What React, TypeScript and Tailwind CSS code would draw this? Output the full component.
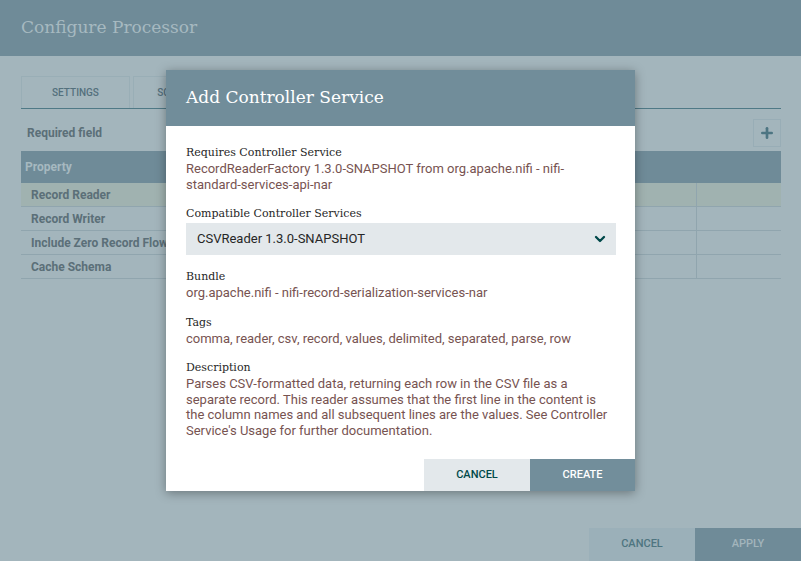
import { ChevronDown, Plus } from "lucide-react";

const slab = "font-['DejaVu_Serif',serif]";
const sans = "font-['Roboto',sans-serif]";

const rows = ["Record Reader", "Record Writer", "Include Zero Record FlowFiles", "Cache Schema"];

function Field({ label, children }: { label: string; children: React.ReactNode }) {
  return (
    <div>
      <div className={`${slab} text-[11px] leading-[16px] text-[#262626]`}>{label}</div>
      <div className="text-[13px] leading-[15.5px] text-[#775351]">{children}</div>
    </div>
  );
}

export default function App() {
  return (
    <div className={`${sans} relative h-[561px] w-[801px] overflow-hidden bg-[#a3b5bc]`}>
      <div className="flex h-[561px] flex-col">
        <div className="flex h-14 items-center bg-[#6f8b98] px-[21px]">
          <h1 className={`${slab} text-[17px] text-[#a6b9c0]`}>Configure Processor</h1>
        </div>

        <div className="pl-[21px] pr-[20px] pt-[20px]">
          <div className="flex gap-[3px] border-b border-[#4f7986]">
            {["SETTINGS", "SCHEDULING"].map((t) => (
              <div
                key={t}
                className="flex h-8 w-[109px] items-center justify-center border border-b-0 border-[#99aeb6] text-[10px] font-medium text-[#54707c]"
              >
                {t}
              </div>
            ))}
          </div>

          <div className="mt-[10px] flex items-center justify-between">
            <span className="pl-[6px] text-[12px] font-bold text-[#5b6f78]">Required field</span>
            <div className="flex h-7 w-7 items-center justify-center border border-[#98adb6]">
              <Plus size={16} strokeWidth={4} className="text-[#4d7582]" />
            </div>
          </div>

          <div className="mt-1">
            <div className="flex h-8 items-center bg-[#6f8b98] px-[4px] text-[12px] font-bold text-[#a6b9c0]">
              Property
            </div>
            {rows.map((r, i) => (
              <div
                key={r}
                className={`flex h-[24px] border-b border-[#90a5ae] text-[12px] font-bold text-[#5b6f78] ${
                  i === 0 ? "bg-[#a0b2b0]" : ""
                }`}
              >
                <div className="flex flex-1 items-center overflow-hidden whitespace-nowrap border-r border-[#90a5ae] pl-[10px]">
                  {r}
                </div>
                <div className="w-[84px]" />
              </div>
            ))}
          </div>
        </div>

        <div className="flex-1" />

        <div className="flex justify-end text-[11px] font-medium">
          <div className="flex h-[33px] w-[106px] items-center justify-center bg-[#9bb0b9] text-[#4e7580]">CANCEL</div>
          <div className="flex h-[33px] w-[106px] items-center justify-center bg-[#6f8b98] text-[#a3b5bc]">APPLY</div>
        </div>
      </div>

      <div className="absolute left-[166px] top-[70px] w-[469px] bg-white shadow-[0_2px_10px_rgba(0,0,0,0.35)]">
        <div className="flex h-14 items-center bg-[#718d9a] px-5">
          <h2 className={`${slab} text-[17px] text-white`}>Add Controller Service</h2>
        </div>
        <div className="flex flex-col gap-[14px] px-5 pt-[19px]">
          <Field label="Requires Controller Service">
            RecordReaderFactory 1.3.0-SNAPSHOT from org.apache.nifi - nifi-
            <br />
            standard-services-api-nar
          </Field>
          <div>
            <div className={`${slab} text-[11px] leading-[16px] text-[#262626]`}>Compatible Controller Services</div>
            <div className="mt-[1px] flex h-8 w-[430px] items-center justify-between bg-[#e3e8eb] pl-[11px] pr-[8px] text-[13px] text-[#262626]">
              <span>CSVReader 1.3.0-SNAPSHOT</span>
              <ChevronDown size={16} strokeWidth={3.5} className="text-[#004849]" />
            </div>
          </div>
          <Field label="Bundle">org.apache.nifi - nifi-record-serialization-services-nar</Field>
          <Field label="Tags">comma, reader, csv, record, values, delimited, separated, parse, row</Field>
          <Field label="Description">
            Parses CSV-formatted data, returning each row in the CSV file as a
            <br />
            separate record. This reader assumes that the first line in the content is
            <br />
            the column names and all subsequent lines are the values. See Controller
            <br />
            Service's Usage for further documentation.
          </Field>
        </div>
        <div className="mt-[21px] flex justify-end text-[11px] font-medium">
          <div className="flex h-8 w-[106px] items-center justify-center bg-[#e3e8eb] text-[#004849]">CANCEL</div>
          <div className="flex h-8 w-[105px] items-center justify-center bg-[#728e9b] text-white">CREATE</div>
        </div>
      </div>
    </div>
  );
}
